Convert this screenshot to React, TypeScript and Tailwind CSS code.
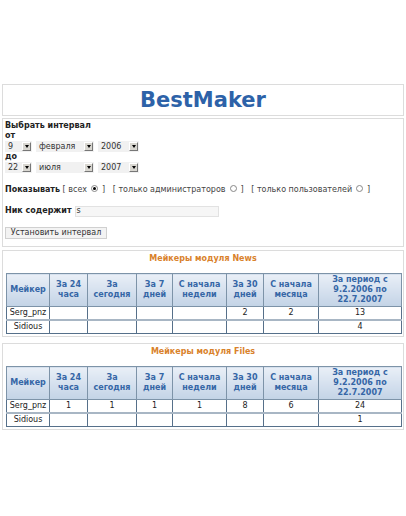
import React from "react";

const font = { fontFamily: '"DejaVu Sans", Verdana, sans-serif' };

const Select = ({ value, w }: { value: string; w: string }) => (
  <div className={`inline-flex h-[11px] items-center justify-between bg-[#f1f1f1] pl-[3px] pr-[1px] ${w}`}>
    <span className="text-[8px] leading-none text-[#333]">{value}</span>
    <span className="flex h-[9px] w-[9px] items-center justify-center border border-t-white border-l-white border-r-[#777] border-b-[#777] bg-[#d8d6d0]">
      <span className="h-0 w-0 border-x-[2.5px] border-t-[3px] border-x-transparent border-t-black" />
    </span>
  </div>
);

const Radio = ({ checked }: { checked?: boolean }) => (
  <span className="relative -top-[2px] mx-[4px] inline-flex h-[7px] w-[7px] items-center justify-center rounded-full border border-[#888] bg-white align-middle">
    {checked && <span className="h-[3px] w-[3px] rounded-full bg-black" />}
  </span>
);

const headers = [
  { label: ["Мейкер"], w: "w-[43px]" },
  { label: ["За 24", "часа"], w: "w-[38px]" },
  { label: ["За", "сегодня"], w: "w-[49px]" },
  { label: ["За 7", "дней"], w: "w-[36px]" },
  { label: ["С начала", "недели"], w: "w-[54px]" },
  { label: ["За 30", "дней"], w: "w-[37px]" },
  { label: ["С начала", "месяца"], w: "w-[55px]" },
  { label: ["За период с", "9.2.2006 по", "22.7.2007"], w: "w-[83px]" },
];

const StatsTable = ({ title, rows }: { title: string; rows: string[][] }) => (
  <div className="border border-[#dcdcdc] px-[3px] pt-[3px] pb-[2px]">
    <div className="mb-[9px] text-center text-[8px] font-bold leading-[10px] text-[#d9822b]">{title}</div>
    <table className="w-[395px] table-fixed border-collapse border border-[#56708a] text-[8px] text-[#222]">
      <thead>
        <tr>
          {headers.map((h) => (
            <th
              key={h.label.join(" ")}
              className={`${h.w} h-[33px] border border-[#7d93a8] bg-gradient-to-b from-[#e9eff7] to-[#c3d3e6] p-0 text-center font-bold leading-[10px] text-[#3566a6]`}
            >
              {h.label.map((l) => (
                <div key={l}>{l}</div>
              ))}
            </th>
          ))}
        </tr>
      </thead>
      <tbody>
        {rows.map((r, i) => (
          <tr key={i} className={i === 0 ? "border-b-2 border-[#a8b6c4]" : ""}>
            {r.map((c, j) => (
              <td key={j} className="h-[12px] border-x border-[#56708a] p-0 text-center leading-[12px]">
                {c}
              </td>
            ))}
          </tr>
        ))}
      </tbody>
    </table>
  </div>
);

export default function App() {
  return (
    <div className="min-h-[516px] w-[406px] bg-white px-[2px] pt-[84px]" style={font}>
      <div className="flex h-[32px] items-center justify-center border border-[#dcdcdc]">
        <span className="text-[21px] font-bold leading-none text-[#2d62a8]">BestMaker</span>
      </div>

      <div className="mt-[2px] flex h-[129px] flex-col border border-[#dcdcdc] px-[2px] pt-[2px] text-[8px] text-[#222]">
        <div className="font-bold leading-[10px]">Выбрать интервал</div>
        <div className="font-bold leading-[10px]">от</div>
        <div className="flex gap-[4px]">
          <Select value="9" w="w-[27px]" />
          <Select value="февраля" w="w-[58px]" />
          <Select value="2006" w="w-[41px]" />
        </div>
        <div className="font-bold leading-[10px]">до</div>
        <div className="flex gap-[4px]">
          <Select value="22" w="w-[27px]" />
          <Select value="июля" w="w-[58px]" />
          <Select value="2007" w="w-[41px]" />
        </div>
        <div className="mt-[12px] flex items-center whitespace-pre leading-[10px] text-[#444]">
          <span className="font-bold text-[#222]">Показывать</span>
          <span> [ всех</span>
          <Radio checked />
          <span>]   [ только администраторов</span>
          <Radio />
          <span>]   [ только пользователей</span>
          <Radio />
          <span>]</span>
        </div>
        <div className="mt-[10px] flex items-center gap-[3px]">
          <span className="font-bold">Ник содержит</span>
          <div className="flex h-[11px] w-[144px] items-center border border-[#e2e2e2] bg-[#f6f6f6] pl-[1px] text-[#333]">
            s
          </div>
        </div>
        <div className="mt-[10px]">
          <button className="h-[12px] w-[102px] border border-[#d0d0d0] bg-[#f3f3f3] text-[8px] leading-none text-[#333]">
            Установить интервал
          </button>
        </div>
      </div>

      <div className="mt-[3px]">
        <StatsTable
          title="Мейкеры модуля News"
          rows={[
            ["Serg_pnz", "", "", "", "", "2", "2", "13"],
            ["Sidious", "", "", "", "", "", "", "4"],
          ]}
        />
      </div>
      <div className="mt-[6px]">
        <StatsTable
          title="Мейкеры модуля Files"
          rows={[
            ["Serg_pnz", "1", "1", "1", "1", "8", "6", "24"],
            ["Sidious", "", "", "", "", "", "", "1"],
          ]}
        />
      </div>
    </div>
  );
}
